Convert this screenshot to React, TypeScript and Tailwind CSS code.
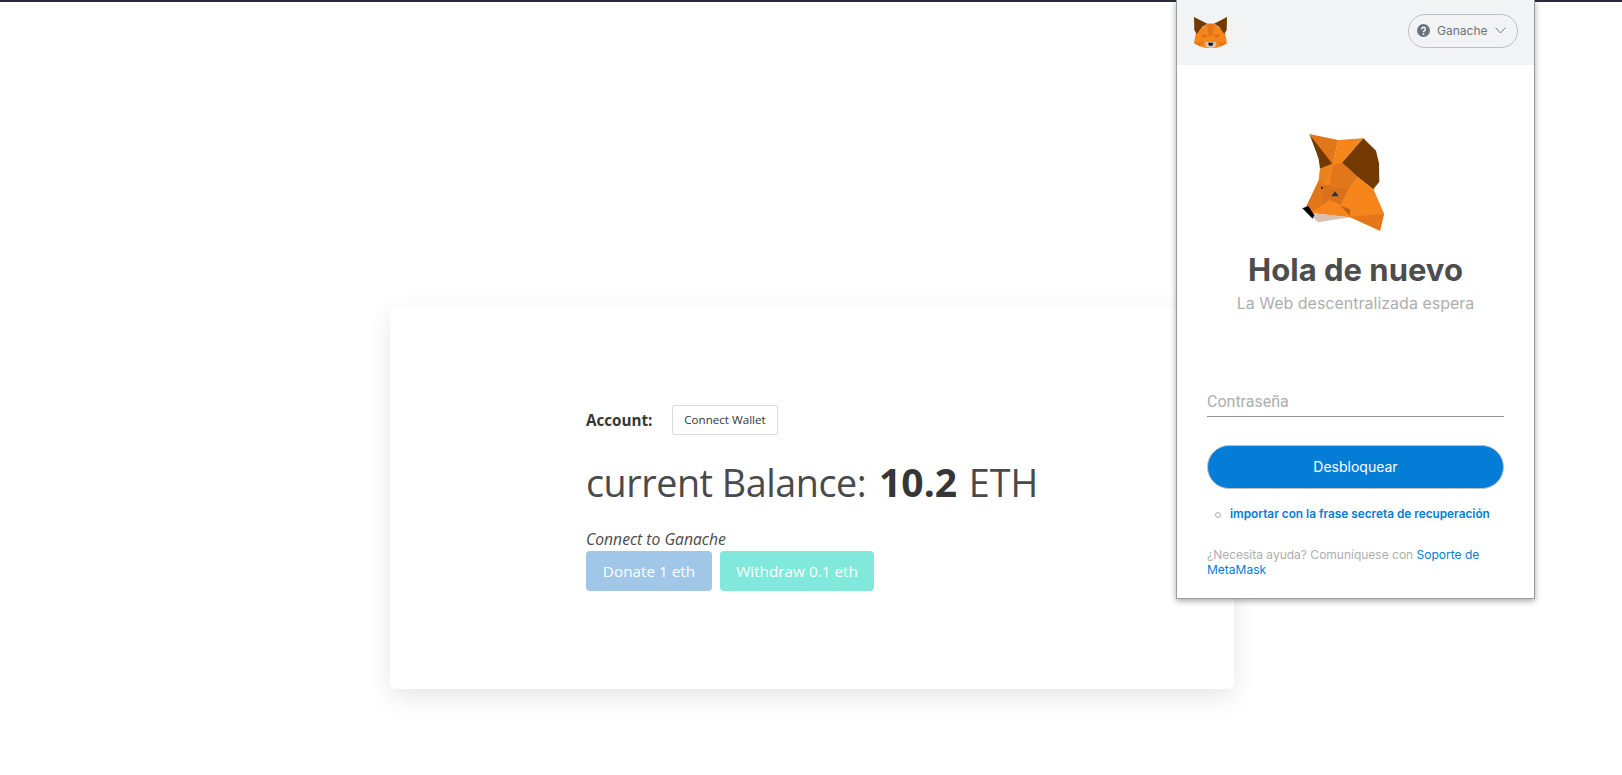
import React from "react";

function BigFox() {
  const p: [string, string][] = [
    ["#f6851b", "190,128 150,146 146,180 108,262 130,280 240,292 330,332 342,282 310,208 262,170 216,128"],
    ["#733a00", "118,42 190,130 150,146 146,118 140,100"],
    ["#e2761b", "118,42 205,60 188,133"],
    ["#f6851b", "205,60 280,55 216,128 190,135 165,195 188,130"],
    ["#733a00", "280,55 318,92 327,130 328,185 310,208 262,170 216,128"],
    ["#e2761b", "216,128 262,170 235,208 178,195 190,135"],
    ["#e8821e", "150,146 188,136 165,195 148,180"],
    ["#e2761b", "148,180 165,195 180,240 130,272 108,262"],
    ["#dc6f1a", "165,195 180,195 180,235 155,255"],
    ["#d9701a", "180,197 235,208 212,255 180,240"],
    ["#f6851b", "262,170 310,208 342,282 240,290 212,255 235,208"],
    ["#e4761b", "240,290 342,282 330,332"],
    ["#f6851b", "130,272 180,240 212,255 240,290 140,280"],
    ["#c0600f", "212,257 240,268 240,288"],
    ["#d7c1b3", "130,280 240,292 145,307 133,297"],
    ["#000000", "97,265 115,258 133,285 128,296"],
    ["#233447", "195,214 206,229 184,229"],
    ["#233447", "153,200 159,200 159,207 153,207"],
  ];
  return (
    <svg viewBox="0 0 390 360" className="block h-[120px] w-[130px]">
      {p.map(([f, pts], i) => (
        <polygon key={i} fill={f} points={pts} />
      ))}
    </svg>
  );
}

function SmallFox() {
  const p: [string, string][] = [
    ["#f6851b", "67,53 87,53 120,78 126,112 112,120 92,126 62,126 42,120 27,112 33,78"],
    ["#733a00", "27,33 67,53 52,62 35,84 28,72"],
    ["#733a00", "126,33 87,53 102,62 118,84 125,72"],
    ["#e2761b", "67,53 87,53 84,90 70,90"],
    ["#d9701a", "46,84 68,88 60,97"],
    ["#d9701a", "108,84 86,88 94,97"],
    ["#e4761b", "27,110 60,108 44,120"],
    ["#e4761b", "126,110 94,108 110,120"],
    ["#d7c1b3", "60,108 94,108 92,122 78,127 62,122"],
    ["#161616", "69,110 85,110 82,119 72,119"],
  ];
  return (
    <svg viewBox="0 0 150 150" className="block h-[50px] w-[50px]">
      {p.map(([f, pts], i) => (
        <polygon key={i} fill={f} points={pts} />
      ))}
    </svg>
  );
}

export default function App() {
  return (
    <div className="relative h-[775px] w-full overflow-hidden bg-white font-['Open_Sans',sans-serif] text-[#363636]">
      <div className="h-[2px] bg-[#2b2c3b]" />
      <div className="pt-[305px]">
        <div className="ml-[390px] h-[382px] w-[844px] rounded-md bg-white pl-[196px] pt-[98px] shadow-[0_8px_24px_rgba(0,0,0,0.1)]">
          <div className="flex h-[30px] items-center">
            <span className="w-[86px] text-[15.2px] font-bold text-[#363636]">Account:</span>
            <button className="h-[30px] w-[106px] rounded-[2px] border border-[#dbdbdb] bg-white text-[11.6px] text-[#363636]">
              Connect Wallet
            </button>
          </div>
          <div className="mt-[18px] text-[37.7px] leading-[58px] text-[#4a4a4a]">
            <span className="tracking-[-0.45px]">current Balance:</span>{" "}
            <span className="ml-[3px] mr-[2px] text-[39px] font-bold text-[#363636]">10.2</span> ETH
          </div>
          <div className="mt-[17px] text-[15.7px] italic leading-[20px] text-[#4a4a4a]">Connect to Ganache</div>
          <div className="mt-[2px] flex gap-2">
            <button className="h-10 w-[126px] rounded bg-[#a0c6e8] text-[15.3px] text-white">Donate 1 eth</button>
            <button className="h-10 w-[154px] rounded bg-[#80e9db] text-[15.3px] text-white">Withdraw 0.1 eth</button>
          </div>
        </div>
      </div>

      <div className="absolute left-[1176px] top-0 h-[599px] w-[359px] border-x border-b border-[#9b9b9b] bg-white font-['Inter',sans-serif] shadow-[0_2px_6px_rgba(0,0,0,0.35)]">
        <div className="flex h-[65px] items-center justify-between bg-[#f2f3f4] pb-[4px] pl-[8px] pr-[16px]">
          <SmallFox />
          <div className="flex h-[34px] w-[110px] items-center rounded-full border border-[#bbc0c5] pl-[8px] text-[12px] text-[#6a737d]">
            <svg viewBox="0 0 24 24" className="h-[13px] w-[13px]">
              <circle cx="12" cy="12" r="12" fill="#6a737d" />
              <path d="M8.5 9.5a3.5 3.5 0 1 1 5.5 2.9c-1.3.8-2 1.4-2 2.8" fill="none" stroke="#fff" strokeWidth="2.6" />
              <circle cx="12" cy="18.6" r="1.7" fill="#fff" />
            </svg>
            <span className="ml-[7px]">Ganache</span>
            <svg viewBox="0 0 12 8" className="ml-[8px] h-[7px] w-[11px]">
              <path d="M.5 .8 6 6.8 11.5 .8" fill="none" stroke="#6a737d" strokeWidth="1.1" />
            </svg>
          </div>
        </div>
        <div className="ml-[93px] mt-[55px]">
          <BigFox />
        </div>
        <h1 className="mt-[10px] text-center text-[31px] font-bold leading-[40px] text-[#4d4d4d]">Hola de nuevo</h1>
        <p className="mt-[3px] text-center text-[16px] leading-[20px] text-[#aeaeae]">La Web descentralizada espera</p>
        <div className="mx-[30px] mt-[75px] h-[29px] border-b border-[#949494] font-['Roboto',sans-serif] text-[16px] leading-[28px] text-[#aeaeae]">
          Contraseña
        </div>
        <button className="mx-[30px] mt-[28px] block h-[44px] w-[297px] rounded-full border border-[#bbc0c5] bg-[#037dd6] pb-[2px] text-[14px] text-white">
          Desbloquear
        </button>
        <div className="ml-[38px] mt-[18px] flex h-[16px] items-center">
          <span className="h-[6px] w-[6px] rounded-full border border-[#aeaeae]" />
          <span className="ml-[9px] text-[11.8px] font-semibold text-[#037dd6]">importar con la frase secreta de recuperación</span>
        </div>
        <p className="mx-[30px] mt-[24px] text-[12px] leading-[15px] text-[#aeaeae]">
          ¿Necesita ayuda? Comuníquese con <span className="text-[#037dd6]">Soporte de MetaMask</span>
        </p>
      </div>
    </div>
  );
}
